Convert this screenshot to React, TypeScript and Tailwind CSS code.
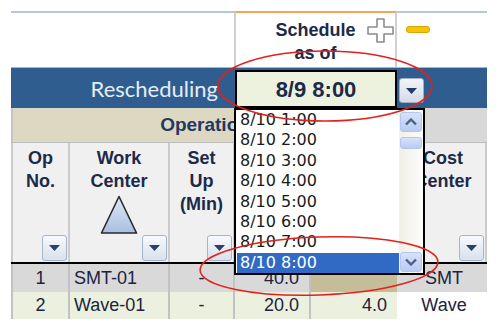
import React from "react";

const times = ["8/10 1:00", "8/10 2:00", "8/10 3:00", "8/10 4:00", "8/10 5:00", "8/10 6:00", "8/10 7:00", "8/10 8:00"];

function FilterButton() {
  return (
    <div className="w-[25px] h-[26px] rounded-[3px] border border-[#a3b5cc] bg-gradient-to-b from-[#f7f9fc] to-[#d9e1ec] flex items-center justify-center">
      <svg width="11" height="6" viewBox="0 0 11 6">
        <path d="M0 0 L11 0 L5.5 6 Z" fill="#2b3f6e" />
      </svg>
    </div>
  );
}

function ScrollButton({ down }: { down?: boolean }) {
  return (
    <div className="h-[20px] mx-[1px] rounded-[3px] border border-[#b3c6ef] bg-gradient-to-b from-[#d7e2fa] to-[#b9cbf2] flex items-center justify-center">
      <svg width="12" height="8" viewBox="0 0 12 8">
        <path d={down ? "M1 1.5 L6 6.5 L11 1.5" : "M1 6.5 L6 1.5 L11 6.5"} stroke="#4d6185" strokeWidth="2.4" fill="none" />
      </svg>
    </div>
  );
}

function HeaderCell({ lines, children, filter = true, className = "" }: { lines: string[]; children?: React.ReactNode; filter?: boolean; className?: string }) {
  return (
    <div className={`bg-[#f0f0f0] border-r-2 border-[#cbcbcb] flex flex-col items-center pt-[4px] pb-[1px] ${className}`}>
      <div className="text-center font-bold text-[18px] leading-[23px] text-[#1c2a4a]">
        {lines.map((l) => (
          <div key={l}>{l}</div>
        ))}
      </div>
      {children}
      {filter && (
        <div className="mt-auto self-end mr-[1px]">
          <FilterButton />
        </div>
      )}
    </div>
  );
}

export default function App() {
  return (
    <div className="w-[501px] h-[334px] bg-white relative overflow-hidden pt-[11px] pl-[11px] font-['Liberation_Sans',Arial,sans-serif]">
      <div className="w-[476px] relative">
        {/* Top header */}
        <div className="flex h-[57px] border-b border-[#aab4c0]">
          <div className="w-[223px] border-t-2 border-[#b7c7d9]" />
          <div className="w-[163px] border-t-2 border-t-[#f4a55a] border-x-2 border-x-[#d0d0d0] flex flex-col items-center pt-[6px] font-bold text-[18px] leading-[23px] text-[#1c2a4a]">
            <span>Schedule</span>
            <span>as of</span>
          </div>
          <div className="w-[90px] border-t-2 border-[#b7c7d9] pl-[9px] pt-[13px]">
            <div className="w-[24px] h-[7px] rounded-[3px] bg-[#f6c400] border border-[#dba400]" />
          </div>
        </div>

        {/* Rescheduling bar */}
        <div className="flex h-[40px] bg-[#305d8f] items-start">
          <div className="w-[224px] h-full flex items-center justify-end pr-[17px] font-['Lato',sans-serif] text-[22px] text-[#e6edf6]">
            Rescheduling
          </div>
          <div className="w-[162px] h-[38px] mt-[2px] border-2 border-black bg-[#edf2de] flex items-center justify-center font-bold text-[22px] text-[#1c2a4a]">
            8/9 8:00
          </div>
          <div className="ml-[2px] mt-[10px] w-[25px] h-[25px] rounded-[3px] border border-[#9fb0c8] bg-gradient-to-b from-[#f2f4f8] to-[#d5dce8] flex items-center justify-center">
            <svg width="11" height="6" viewBox="0 0 11 6">
              <path d="M0 0 L11 0 L5.5 6 Z" fill="#24386a" />
            </svg>
          </div>
        </div>

        {/* Group row */}
        <div className="grid grid-cols-[386px_90px] h-[35px] border-b border-[#bcbcbc]">
          <div className="bg-[#ddd8c2] border-l-2 border-[#c4c4c4] flex items-center justify-center font-bold text-[19px] text-[#1f3864]">
            Operation
          </div>
          <div className="bg-[#d8d8d8]" />
        </div>

        {/* Column headers (cols 4 and 5 sit under the open list) */}
        <div className="grid grid-cols-[59px_100px_65px_76px_86px_90px] h-[121px] border-b-2 border-black">
          <HeaderCell lines={["Op", "No."]} className="border-l-2 border-l-[#cbcbcb]" />
          <HeaderCell lines={["Work", "Center"]}>
            <svg width="38" height="40" viewBox="0 0 38 40" className="mt-[2px]">
              <defs>
                <linearGradient id="tri" x1="0" y1="0" x2="0" y2="1">
                  <stop offset="0" stopColor="#dfe8f5" />
                  <stop offset="1" stopColor="#a7bfe2" />
                </linearGradient>
              </defs>
              <path d="M19 1.5 L36.5 38 L1.5 38 Z" fill="url(#tri)" stroke="#2a2a2a" strokeWidth="1.6" strokeLinejoin="round" />
            </svg>
          </HeaderCell>
          <HeaderCell lines={["Set", "Up", "(Min)"]} />
          <HeaderCell lines={[]} filter={false} />
          <HeaderCell lines={[]} filter={false} />
          <HeaderCell lines={["Cost", "Center"]} className="pl-[4px] border-r-0" />
        </div>

        {/* Data rows */}
        <div className="grid grid-cols-[59px_100px_65px_76px_86px_90px] h-[28px] bg-[#d9d9d9] text-[18px] text-[#1c2340]">
          <div className="border-x-2 border-[#c2c2c2] flex items-center justify-center">1</div>
          <div className="border-r-2 border-[#c2c2c2] flex items-center pl-[4px]">SMT-01</div>
          <div className="border-r-2 border-[#c2c2c2] flex items-center justify-center">-</div>
          <div className="border-r-2 border-[#c2c2c2] flex items-center justify-end pr-[10px]">40.0</div>
          <div className="bg-[#c4bd97]" />
          <div className="flex items-center justify-center pl-[4px]">SMT</div>
        </div>
        <div className="grid grid-cols-[59px_100px_65px_76px_86px_90px] h-[27px] text-[18px] text-[#1c2340]">
          <div className="bg-[#ebf1de] border-x-2 border-[#c2c2c2] flex items-center justify-center">2</div>
          <div className="bg-[#ebf1de] border-r-2 border-[#c2c2c2] flex items-center pl-[4px]">Wave-01</div>
          <div className="bg-[#ebf1de] border-r-2 border-[#c2c2c2] flex items-center justify-center">-</div>
          <div className="bg-[#ebf1de] border-r-2 border-[#c2c2c2] flex items-center justify-end pr-[10px]">20.0</div>
          <div className="bg-[#ebf1de] flex items-center justify-end pr-[10px]">4.0</div>
          <div className="bg-white flex items-center justify-center pl-[4px]">Wave</div>
        </div>

        {/* Open dropdown list */}
        <div className="absolute left-[223px] top-[97px] w-[191px] h-[167px] border-2 border-black bg-white flex">
          <div className="flex-1 pl-[1px] font-['DejaVu_Sans',sans-serif] text-[16px] text-[#1a1a1a]">
            {times.map((t, i) => (
              <div
                key={t}
                className={`h-[20.4px] leading-[20.4px] pl-[3px] ${i === times.length - 1 ? "bg-[#316ac5] text-white" : ""}`}
              >
                {t}
              </div>
            ))}
          </div>
          <div className="w-[24px] bg-gradient-to-r from-[#f1efe6] to-[#fcfcfa] flex flex-col pt-[2px] pb-[1px]">
            <ScrollButton />
            <div className="h-[12px] mx-[1px] mt-[5px] rounded-[3px] border border-[#b3c6ef] bg-gradient-to-b from-[#d7e2fa] to-[#b9cbf2]" />
            <div className="flex-1" />
            <ScrollButton down />
          </div>
        </div>
      </div>

      {/* Red annotation ellipses */}
      <svg className="absolute inset-0 pointer-events-none" width="501" height="334" viewBox="0 0 501 334">
        <ellipse cx="325" cy="86" rx="107" ry="35" fill="none" stroke="#e3201b" strokeWidth="1.5" />
        <ellipse cx="319" cy="266" rx="119" ry="29" fill="none" stroke="#e3201b" strokeWidth="1.5" transform="rotate(-2 319 266)" />
      </svg>

      {/* Add icon */}
      <svg className="absolute left-[367px] top-[18px]" width="27" height="25" viewBox="0 0 27 25">
        <path d="M10 1 H17 V9 H26 V16 H17 V24 H10 V16 H1 V9 H10 Z" fill="#ffffff" stroke="#8c8c8c" strokeWidth="1.6" strokeLinejoin="round" />
      </svg>
    </div>
  );
}
